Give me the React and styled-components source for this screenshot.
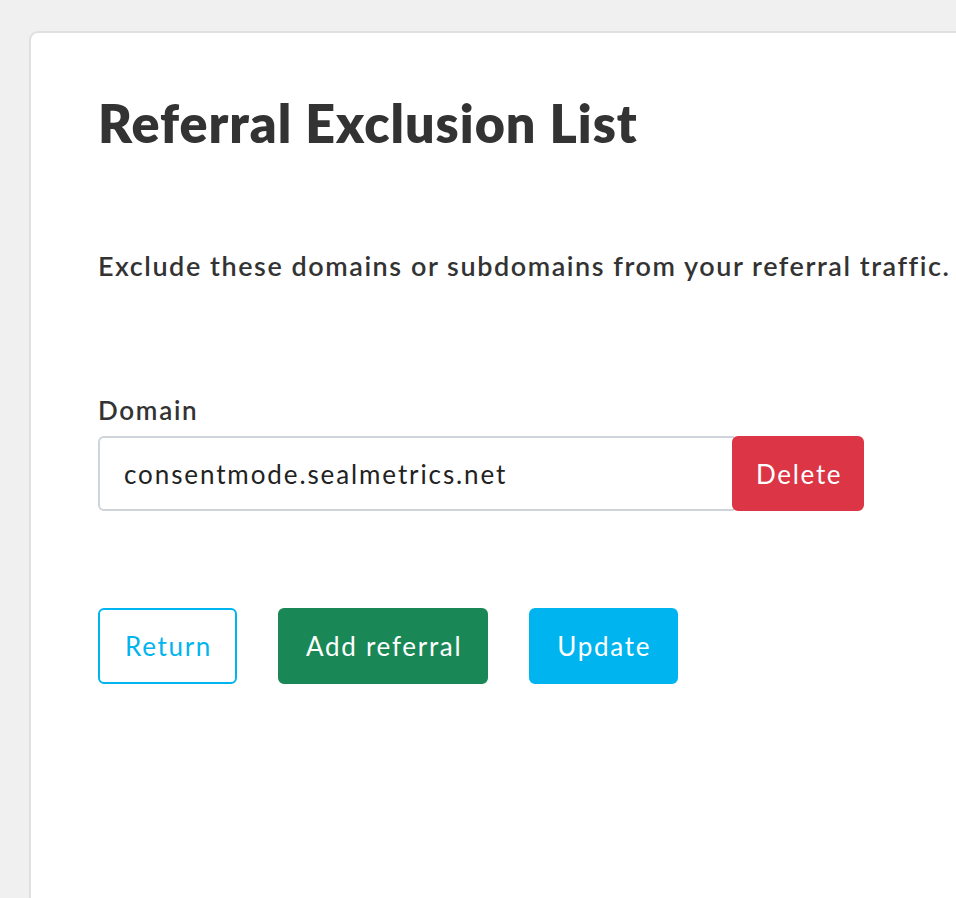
import React, { useState } from "react";
import styled, { createGlobalStyle } from "styled-components";

const GlobalStyle = createGlobalStyle`
  html, body {
    margin: 0;
    padding: 0;
    background: #f0f0f0;
    font-family: Lato, "Open Sans", sans-serif;
    color: #333333;
    overflow: hidden;
  }
`;

const Page = styled.div`
  padding: 31px 0 0 29px;
  height: 898px;
  box-sizing: border-box;
`;

const Card = styled.div`
  background: #ffffff;
  border: 2px solid #e0e0e0;
  border-right: none;
  border-bottom: none;
  border-top-left-radius: 9px;
  padding: 60px 0 0 67px;
  height: 100%;
  box-sizing: border-box;
  width: 927px;
  overflow: hidden;
`;

const Title = styled.h1`
  margin: 0;
  font-size: 52px;
  font-weight: 800;
  line-height: 60px;
  color: #333333;
  letter-spacing: 1px;
  white-space: nowrap;
`;

const Lead = styled.p`
  margin: 98px 0 0;
  font-size: 27px;
  font-weight: 600;
  line-height: 30px;
  letter-spacing: 1.55px;
  color: #333333;
  white-space: nowrap;
`;

const Label = styled.label`
  display: block;
  margin-top: 114px;
  font-size: 26px;
  font-weight: 600;
  line-height: 30px;
  letter-spacing: 1.7px;
`;

const FieldRow = styled.div`
  display: flex;
  margin-top: 11px;
`;

const Input = styled.input`
  width: 636px;
  height: 75px;
  box-sizing: border-box;
  border: 2px solid #ced4da;
  border-right: none;
  border-radius: 6px 0 0 6px;
  padding: 0 24px;
  font-family: inherit;
  font-size: 26px;
  letter-spacing: 1.9px;
  color: #222222;
  outline: none;
`;

const Button = styled.button`
  height: ${({ $h }) => $h || 76}px;
  padding: 0 ${({ $pr }) => $pr ?? 23}px 0 ${({ $pl }) => $pl ?? 25}px;
  box-sizing: border-box;
  border: 2px solid ${({ $bg, $border }) => $border || $bg};
  background: ${({ $bg }) => $bg};
  color: ${({ $fg }) => $fg || "#ffffff"};
  border-radius: 6px;
  font-family: inherit;
  font-size: 26px;
  letter-spacing: 1.7px;
  cursor: pointer;
`;

const DeleteButton = styled(Button)`
  margin-left: -2px;
`;

const Actions = styled.div`
  display: flex;
  gap: 41px;
  margin-top: 97px;
`;

export default function App() {
  const [domain, setDomain] = useState("consentmode.sealmetrics.net");
  return (
    <>
      <GlobalStyle />
      <Page>
        <Card>
          <Title>Referral Exclusion List</Title>
          <Lead>Exclude these domains or subdomains from your referral traffic.</Lead>
          <Label htmlFor="domain">Domain</Label>
          <FieldRow>
            <Input id="domain" value={domain} onChange={(e) => setDomain(e.target.value)} />
            <DeleteButton $bg="#dc3545" $h={75} $pl={22} $pr={20}>Delete</DeleteButton>
          </FieldRow>
          <Actions>
            <Button $bg="#ffffff" $border="#00b5ef" $fg="#00b5ef">Return</Button>
            <Button $bg="#1a8856" $pl={26} $pr={24}>Add referral</Button>
            <Button $bg="#00b5ef" $pl={26} $pr={25}>Update</Button>
          </Actions>
        </Card>
      </Page>
    </>
  );
}
